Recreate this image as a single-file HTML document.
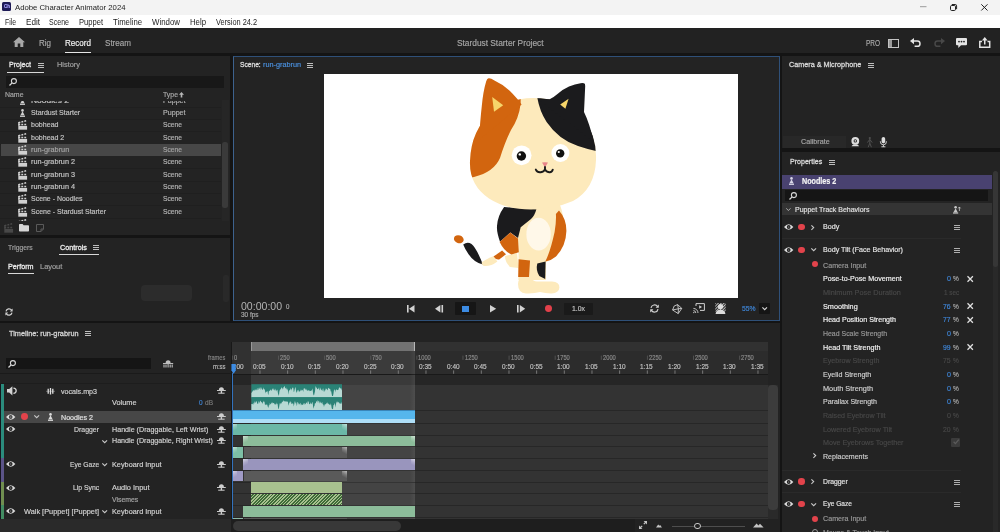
<!DOCTYPE html>
<html><head><meta charset="utf-8"><title>Adobe Character Animator 2024</title>
<style>
*{box-sizing:border-box;margin:0;padding:0}
html,body{width:1000px;height:532px;overflow:hidden;background:#141414;font-family:"Liberation Sans",sans-serif;font-size:8.5px;color:#c8c8c8}
#app{position:absolute;left:0;top:0;width:1000px;height:532px;will-change:transform}
.a{position:absolute}
.t{position:absolute;white-space:nowrap;transform-origin:0 0;-webkit-text-stroke:.18px currentColor}
.p{position:absolute;background:#232323;overflow:hidden}
svg{position:absolute;overflow:visible}
</style></head><body><div id="app">
<div class="a" style="left:0px;top:0px;width:1000px;height:15px;background:#f3f3f3;"></div>
<div class="a" style="left:0px;top:15px;width:1000px;height:13px;background:#ffffff;"></div>
<div class="a" style="left:2px;top:2.4px;width:9px;height:8.6px;background:#1d1a56;border-radius:1.5px"></div>
<div class="t" style="left:3.50px;top:3.49px;font-size:5.20px;line-height:6.50px;color:#a9a4ff;font-weight:700;transform:scaleX(0.8668);">Ch</div>
<div class="t" style="left:15.00px;top:2.63px;font-size:7.50px;line-height:9.38px;color:#1c1c1c;transform:scaleX(1.0312);-webkit-text-stroke:0;">Adobe Character Animator 2024</div>
<div class="t" style="left:5.00px;top:17.30px;font-size:8.30px;line-height:10.38px;color:#1c1c1c;transform:scaleX(0.8224);-webkit-text-stroke:0;">File</div>
<div class="t" style="left:26.00px;top:17.30px;font-size:8.30px;line-height:10.38px;color:#1c1c1c;transform:scaleX(0.9792);-webkit-text-stroke:0;">Edit</div>
<div class="t" style="left:49.00px;top:17.30px;font-size:8.30px;line-height:10.38px;color:#1c1c1c;transform:scaleX(0.8499);-webkit-text-stroke:0;">Scene</div>
<div class="t" style="left:79.00px;top:17.30px;font-size:8.30px;line-height:10.38px;color:#1c1c1c;transform:scaleX(0.9127);-webkit-text-stroke:0;">Puppet</div>
<div class="t" style="left:113.00px;top:17.30px;font-size:8.30px;line-height:10.38px;color:#1c1c1c;transform:scaleX(0.9341);-webkit-text-stroke:0;">Timeline</div>
<div class="t" style="left:152.00px;top:17.30px;font-size:8.30px;line-height:10.38px;color:#1c1c1c;transform:scaleX(0.9487);-webkit-text-stroke:0;">Window</div>
<div class="t" style="left:190.00px;top:17.30px;font-size:8.30px;line-height:10.38px;color:#1c1c1c;transform:scaleX(0.9369);-webkit-text-stroke:0;">Help</div>
<div class="t" style="left:215.50px;top:17.30px;font-size:8.30px;line-height:10.38px;color:#1c1c1c;transform:scaleX(0.8886);-webkit-text-stroke:0;">Version 24.2</div>
<svg style="left:920px;top:6px;" width="7" height="2" viewBox="0 0 7 2"><path d="M0 .7H6.5" stroke="#9a9a9a" stroke-width="1"/></svg>
<svg style="left:950px;top:4px;" width="7" height="7" viewBox="0 0 7 7"><rect x=".5" y="1.5" width="5" height="5" rx="1.2" fill="none" stroke="#222" stroke-width="1"/><path d="M1.8 .5H5.3Q6.6 .5 6.6 1.8V5.2" fill="none" stroke="#222" stroke-width="1"/></svg>
<svg style="left:981px;top:4px;" width="7" height="7" viewBox="0 0 7 7"><path d="M.3 .3L6.5 6.5M6.5 .3L.3 6.5" stroke="#222" stroke-width="1"/></svg>
<div class="a" style="left:0px;top:28px;width:1000px;height:25px;background:#222222;"></div>
<div class="a" style="left:0px;top:53px;width:1000px;height:3px;background:#141414;"></div>
<svg style="left:13px;top:37px;" width="12" height="10" viewBox="0 0 12 10"><path d="M6 0L12 5.2H10.3V10H7.3V6.6H4.7V10H1.7V5.2H0Z" fill="#a8a8a8"/></svg>
<div class="t" style="left:39.00px;top:38.30px;font-size:8.70px;line-height:10.88px;color:#a6a6a6;transform:scaleX(0.9198);">Rig</div>
<div class="t" style="left:64.50px;top:38.30px;font-size:8.70px;line-height:10.88px;color:#f2f2f2;transform:scaleX(0.9281);">Record</div>
<div class="a" style="left:64.5px;top:51.8px;width:26.5px;height:1.5px;background:#e6e6e6;"></div>
<div class="t" style="left:105.00px;top:38.30px;font-size:8.70px;line-height:10.88px;color:#a6a6a6;transform:scaleX(0.9281);">Stream</div>
<div class="t" style="left:456.60px;top:38.10px;font-size:8.70px;line-height:10.88px;color:#a6a6a6;transform:scaleX(0.9580);">Stardust Starter Project</div>
<div class="t" style="left:866.00px;top:38.25px;font-size:8.30px;line-height:10.38px;color:#a8a8a8;transform:scaleX(0.7785);">PRO</div>
<svg style="left:888px;top:39px;" width="11" height="9" viewBox="0 0 11 9"><rect x=".5" y=".5" width="10" height="8" fill="none" stroke="#c4c4c4" stroke-width="1"/><rect x="1" y="1" width="3" height="7" fill="#c4c4c4" opacity=".75"/></svg>
<svg style="left:910px;top:38px;" width="11" height="9" viewBox="0 0 11 9"><path d="M4 0L0 3L4 6.2Z" fill="#e4e4e4"/><path d="M3 3.1H7.4A2.6 2.6 0 0 1 7.4 8.3H4.6" fill="none" stroke="#e4e4e4" stroke-width="1.5"/></svg>
<svg style="left:933.5px;top:38px;" width="11" height="9" viewBox="0 0 11 9"><path d="M7 0L11 3L7 6.2Z" fill="#484848"/><path d="M8 3.1H3.6A2.6 2.6 0 0 0 3.6 8.3H6.4" fill="none" stroke="#484848" stroke-width="1.5"/></svg>
<svg style="left:956px;top:37.5px;" width="11" height="10" viewBox="0 0 11 10"><path d="M1 0H10Q11 0 11 1V6.3Q11 7.3 10 7.3H5L2.3 10V7.3H1Q0 7.3 0 6.3V1Q0 0 1 0Z" fill="#e4e4e4"/><circle cx="3" cy="3.6" r=".9" fill="#222"/><circle cx="5.5" cy="3.6" r=".9" fill="#222"/><circle cx="8" cy="3.6" r=".9" fill="#222"/></svg>
<svg style="left:979px;top:37px;" width="11.5" height="11" viewBox="0 0 11.5 11"><path d="M3 4.6H.8V10.2H10.7V4.6H8.5" fill="none" stroke="#e4e4e4" stroke-width="1.5"/><path d="M5.75 7.5V1.5" stroke="#e4e4e4" stroke-width="1.5"/><path d="M2.9 3.4L5.75 0L8.6 3.4Z" fill="#e4e4e4"/></svg>
<div class="p" style="left:0;top:56px;width:229.5px;height:178.5px">
<div class="t" style="left:8.50px;top:4.24px;font-size:7.60px;line-height:9.50px;color:#e8e8e8;transform:scaleX(0.9306);-webkit-text-stroke:.3px currentColor;">Project</div>
<svg style="left:37.5px;top:6.8px;" width="6" height="5" viewBox="0 0 6 5"><path d="M0 .5H6M0 2.5H6M0 4.5H6" stroke="#cfcfcf" stroke-width=".9" fill="none"/></svg>
<div class="a" style="left:7px;top:15.8px;width:36.5px;height:1.1px;background:#d8d8d8;"></div>
<div class="t" style="left:57.00px;top:4.24px;font-size:7.60px;line-height:9.50px;color:#a2a2a2;transform:scaleX(0.9729);">History</div>
<div class="a" style="left:6px;top:19.8px;width:218px;height:12px;background:#181818;"></div>
<svg style="left:9px;top:22px;" width="8" height="8" viewBox="0 0 8 8"><circle cx="4.9" cy="3.1" r="2.5" fill="none" stroke="#d8d8d8" stroke-width="1.1"/><path d="M3.1 4.9L.5 7.5" stroke="#d8d8d8" stroke-width="1.3"/></svg>
<div class="t" style="left:4.50px;top:34.44px;font-size:7.60px;line-height:9.50px;color:#a8a8a8;transform:scaleX(0.9129);">Name</div>
<div class="t" style="left:163.00px;top:34.44px;font-size:7.60px;line-height:9.50px;color:#a8a8a8;transform:scaleX(0.9108);">Type</div>
<svg style="left:179.4px;top:36.2px;" width="5" height="5.6" viewBox="0 0 5 5.6"><path d="M2.5 0L5 2.8H3.3V5.6H1.7V2.8H0Z" fill="#b8b8b8"/></svg>
<div class="a" style="left:0;top:45.3px;width:221px;height:119.4px;overflow:hidden">
<svg style="left:17.5px;top:117.65px;" width="9.4" height="9.7" viewBox="0 0 9.4 9.7"><rect x=".3" y="5.9" width="8.8" height="3.8" fill="#d0d0d0"/><path d="M.3 4.5H9.1" stroke="#d0d0d0" stroke-width="1.5" stroke-dasharray="1.9 1.1"/><path d="M.5 2.7L8.7 .7" stroke="#d0d0d0" stroke-width="1.5" stroke-dasharray="1.9 1.1"/><rect x=".3" y="2" width="1.2" height="4" fill="#d0d0d0"/></svg>
<div class="a" style="left:0px;top:5.25px;width:221px;height:0.8px;background:#1f1f1f;"></div>
<svg style="left:19.5px;top:-4.45px;" width="5" height="8" viewBox="0 0 5 8"><circle cx="2.5" cy="1.4" r="1.3" fill="#d0d0d0"/><path d="M2.5 2.2L4.6 6.3H.4Z" fill="#d0d0d0"/><rect x="0" y="6.6" width="5" height="1.3" fill="#d0d0d0"/></svg>
<div class="t" style="left:30.50px;top:-5.51px;font-size:7.60px;line-height:9.50px;color:#c4c4c4;transform:scaleX(1.1110);">Noodles 2</div>
<div class="t" style="left:163.00px;top:-5.51px;font-size:7.60px;line-height:9.50px;color:#b4b4b4;transform:scaleX(0.9345);">Puppet</div>
<div class="a" style="left:0px;top:17.58px;width:221px;height:0.8px;background:#1f1f1f;"></div>
<svg style="left:19.5px;top:7.88px;" width="5" height="8" viewBox="0 0 5 8"><circle cx="2.5" cy="1.4" r="1.3" fill="#d0d0d0"/><path d="M2.5 2.2L4.6 6.3H.4Z" fill="#d0d0d0"/><rect x="0" y="6.6" width="5" height="1.3" fill="#d0d0d0"/></svg>
<div class="t" style="left:30.50px;top:6.82px;font-size:7.60px;line-height:9.50px;color:#c4c4c4;transform:scaleX(0.9250);">Stardust Starter</div>
<div class="t" style="left:163.00px;top:6.82px;font-size:7.60px;line-height:9.50px;color:#b4b4b4;transform:scaleX(0.9345);">Puppet</div>
<div class="a" style="left:0px;top:29.91px;width:221px;height:0.8px;background:#1f1f1f;"></div>
<svg style="left:17.5px;top:19.01px;" width="9.4" height="9.7" viewBox="0 0 9.4 9.7"><rect x=".3" y="5.9" width="8.8" height="3.8" fill="#d0d0d0"/><path d="M.3 4.5H9.1" stroke="#d0d0d0" stroke-width="1.5" stroke-dasharray="1.9 1.1"/><path d="M.5 2.7L8.7 .7" stroke="#d0d0d0" stroke-width="1.5" stroke-dasharray="1.9 1.1"/><rect x=".3" y="2" width="1.2" height="4" fill="#d0d0d0"/></svg>
<div class="t" style="left:30.50px;top:19.15px;font-size:7.60px;line-height:9.50px;color:#c4c4c4;transform:scaleX(0.9297);">bobhead</div>
<div class="t" style="left:163.00px;top:19.15px;font-size:7.60px;line-height:9.50px;color:#b4b4b4;transform:scaleX(0.8818);">Scene</div>
<div class="a" style="left:0px;top:42.24px;width:221px;height:0.8px;background:#1f1f1f;"></div>
<svg style="left:17.5px;top:31.34px;" width="9.4" height="9.7" viewBox="0 0 9.4 9.7"><rect x=".3" y="5.9" width="8.8" height="3.8" fill="#d0d0d0"/><path d="M.3 4.5H9.1" stroke="#d0d0d0" stroke-width="1.5" stroke-dasharray="1.9 1.1"/><path d="M.5 2.7L8.7 .7" stroke="#d0d0d0" stroke-width="1.5" stroke-dasharray="1.9 1.1"/><rect x=".3" y="2" width="1.2" height="4" fill="#d0d0d0"/></svg>
<div class="t" style="left:30.50px;top:31.48px;font-size:7.60px;line-height:9.50px;color:#c4c4c4;transform:scaleX(0.9274);">bobhead 2</div>
<div class="t" style="left:163.00px;top:31.48px;font-size:7.60px;line-height:9.50px;color:#b4b4b4;transform:scaleX(0.8818);">Scene</div>
<div class="a" style="left:1px;top:43.07px;width:220px;height:11.3px;background:#474747;"></div>
<svg style="left:17.5px;top:43.67px;" width="9.4" height="9.7" viewBox="0 0 9.4 9.7"><rect x=".3" y="5.9" width="8.8" height="3.8" fill="#d0d0d0"/><path d="M.3 4.5H9.1" stroke="#d0d0d0" stroke-width="1.5" stroke-dasharray="1.9 1.1"/><path d="M.5 2.7L8.7 .7" stroke="#d0d0d0" stroke-width="1.5" stroke-dasharray="1.9 1.1"/><rect x=".3" y="2" width="1.2" height="4" fill="#d0d0d0"/></svg>
<div class="t" style="left:30.50px;top:43.81px;font-size:7.60px;line-height:9.50px;color:#a4a4a4;transform:scaleX(0.9625);">run-grabrun</div>
<div class="t" style="left:163.00px;top:43.81px;font-size:7.60px;line-height:9.50px;color:#a4a4a4;transform:scaleX(0.8818);">Scene</div>
<div class="a" style="left:0px;top:66.9px;width:221px;height:0.8px;background:#1f1f1f;"></div>
<svg style="left:17.5px;top:56px;" width="9.4" height="9.7" viewBox="0 0 9.4 9.7"><rect x=".3" y="5.9" width="8.8" height="3.8" fill="#d0d0d0"/><path d="M.3 4.5H9.1" stroke="#d0d0d0" stroke-width="1.5" stroke-dasharray="1.9 1.1"/><path d="M.5 2.7L8.7 .7" stroke="#d0d0d0" stroke-width="1.5" stroke-dasharray="1.9 1.1"/><rect x=".3" y="2" width="1.2" height="4" fill="#d0d0d0"/></svg>
<div class="t" style="left:30.50px;top:56.14px;font-size:7.60px;line-height:9.50px;color:#c4c4c4;transform:scaleX(0.9562);">run-grabrun 2</div>
<div class="t" style="left:163.00px;top:56.14px;font-size:7.60px;line-height:9.50px;color:#b4b4b4;transform:scaleX(0.8818);">Scene</div>
<div class="a" style="left:0px;top:79.23px;width:221px;height:0.8px;background:#1f1f1f;"></div>
<svg style="left:17.5px;top:68.33px;" width="9.4" height="9.7" viewBox="0 0 9.4 9.7"><rect x=".3" y="5.9" width="8.8" height="3.8" fill="#d0d0d0"/><path d="M.3 4.5H9.1" stroke="#d0d0d0" stroke-width="1.5" stroke-dasharray="1.9 1.1"/><path d="M.5 2.7L8.7 .7" stroke="#d0d0d0" stroke-width="1.5" stroke-dasharray="1.9 1.1"/><rect x=".3" y="2" width="1.2" height="4" fill="#d0d0d0"/></svg>
<div class="t" style="left:30.50px;top:68.47px;font-size:7.60px;line-height:9.50px;color:#c4c4c4;transform:scaleX(0.9562);">run-grabrun 3</div>
<div class="t" style="left:163.00px;top:68.47px;font-size:7.60px;line-height:9.50px;color:#b4b4b4;transform:scaleX(0.8818);">Scene</div>
<div class="a" style="left:0px;top:91.56px;width:221px;height:0.8px;background:#1f1f1f;"></div>
<svg style="left:17.5px;top:80.66px;" width="9.4" height="9.7" viewBox="0 0 9.4 9.7"><rect x=".3" y="5.9" width="8.8" height="3.8" fill="#d0d0d0"/><path d="M.3 4.5H9.1" stroke="#d0d0d0" stroke-width="1.5" stroke-dasharray="1.9 1.1"/><path d="M.5 2.7L8.7 .7" stroke="#d0d0d0" stroke-width="1.5" stroke-dasharray="1.9 1.1"/><rect x=".3" y="2" width="1.2" height="4" fill="#d0d0d0"/></svg>
<div class="t" style="left:30.50px;top:80.80px;font-size:7.60px;line-height:9.50px;color:#c4c4c4;transform:scaleX(0.9562);">run-grabrun 4</div>
<div class="t" style="left:163.00px;top:80.80px;font-size:7.60px;line-height:9.50px;color:#b4b4b4;transform:scaleX(0.8818);">Scene</div>
<div class="a" style="left:0px;top:103.89px;width:221px;height:0.8px;background:#1f1f1f;"></div>
<svg style="left:17.5px;top:92.99px;" width="9.4" height="9.7" viewBox="0 0 9.4 9.7"><rect x=".3" y="5.9" width="8.8" height="3.8" fill="#d0d0d0"/><path d="M.3 4.5H9.1" stroke="#d0d0d0" stroke-width="1.5" stroke-dasharray="1.9 1.1"/><path d="M.5 2.7L8.7 .7" stroke="#d0d0d0" stroke-width="1.5" stroke-dasharray="1.9 1.1"/><rect x=".3" y="2" width="1.2" height="4" fill="#d0d0d0"/></svg>
<div class="t" style="left:30.50px;top:93.13px;font-size:7.60px;line-height:9.50px;color:#c4c4c4;transform:scaleX(0.9171);">Scene - Noodles</div>
<div class="t" style="left:163.00px;top:93.13px;font-size:7.60px;line-height:9.50px;color:#b4b4b4;transform:scaleX(0.8818);">Scene</div>
<div class="a" style="left:0px;top:116.22px;width:221px;height:0.8px;background:#1f1f1f;"></div>
<svg style="left:17.5px;top:105.32px;" width="9.4" height="9.7" viewBox="0 0 9.4 9.7"><rect x=".3" y="5.9" width="8.8" height="3.8" fill="#d0d0d0"/><path d="M.3 4.5H9.1" stroke="#d0d0d0" stroke-width="1.5" stroke-dasharray="1.9 1.1"/><path d="M.5 2.7L8.7 .7" stroke="#d0d0d0" stroke-width="1.5" stroke-dasharray="1.9 1.1"/><rect x=".3" y="2" width="1.2" height="4" fill="#d0d0d0"/></svg>
<div class="t" style="left:30.50px;top:105.46px;font-size:7.60px;line-height:9.50px;color:#c4c4c4;transform:scaleX(0.9206);">Scene - Stardust Starter</div>
<div class="t" style="left:163.00px;top:105.46px;font-size:7.60px;line-height:9.50px;color:#b4b4b4;transform:scaleX(0.8818);">Scene</div>
</div>
<div class="a" style="left:221.5px;top:43.5px;width:7.5px;height:121px;background:#262626;"></div>
<div class="a" style="left:222px;top:85.5px;width:5.5px;height:66px;background:#3a3a3a;border-radius:2.5px"></div>
<svg style="left:4.3px;top:167.1px;" width="9.4" height="9.7" viewBox="0 0 9.4 9.7"><rect x=".3" y="5.9" width="8.8" height="3.8" fill="#484848"/><path d="M.3 4.5H9.1" stroke="#484848" stroke-width="1.5" stroke-dasharray="1.9 1.1"/><path d="M.5 2.7L8.7 .7" stroke="#484848" stroke-width="1.5" stroke-dasharray="1.9 1.1"/><rect x=".3" y="2" width="1.2" height="4" fill="#484848"/></svg>
<svg style="left:19px;top:168.2px;" width="10" height="7.5" viewBox="0 0 10 7.5"><path d="M0 .8Q0 0 .8 0H3.6L4.6 1.2H9.2Q10 1.2 10 2V6.7Q10 7.5 9.2 7.5H.8Q0 7.5 0 6.7Z" fill="#d6d6d6"/></svg>
<svg style="left:36px;top:168px;" width="8" height="8" viewBox="0 0 8 8"><path d="M.5 .5H7.5V5L5 7.5H.5Z M7.5 5H5V7.5" fill="none" stroke="#5a5a5a" stroke-width="1"/></svg>
</div>
<div class="p" style="left:0;top:237.8px;width:229.5px;height:83.4px">
<div class="t" style="left:8.40px;top:5.14px;font-size:7.60px;line-height:9.50px;color:#a2a2a2;transform:scaleX(0.8920);">Triggers</div>
<div class="t" style="left:59.60px;top:5.14px;font-size:7.60px;line-height:9.50px;color:#ececec;transform:scaleX(0.9547);-webkit-text-stroke:.3px currentColor;">Controls</div>
<svg style="left:92.8px;top:7.2px;" width="6" height="5" viewBox="0 0 6 5"><path d="M0 .5H6M0 2.5H6M0 4.5H6" stroke="#cfcfcf" stroke-width=".9" fill="none"/></svg>
<div class="a" style="left:58.7px;top:16.5px;width:40px;height:1.1px;background:#d8d8d8;"></div>
<div class="t" style="left:7.50px;top:24.14px;font-size:7.60px;line-height:9.50px;color:#ececec;transform:scaleX(0.9439);-webkit-text-stroke:.3px currentColor;">Perform</div>
<div class="a" style="left:7.5px;top:35.1px;width:26.2px;height:1px;background:#d8d8d8;"></div>
<div class="t" style="left:40.00px;top:24.14px;font-size:7.60px;line-height:9.50px;color:#a2a2a2;transform:scaleX(0.9775);">Layout</div>
<div class="a" style="left:141px;top:47.4px;width:51px;height:16.3px;background:#2c2c2c;border-radius:4px"></div>
<div class="a" style="left:222.5px;top:37.2px;width:6px;height:27px;background:#292929;border-radius:2px"></div>
<svg style="left:5px;top:69.9px;" width="8" height="8" viewBox="0 0 8 8"><path d="M1 3.4A3.1 3.1 0 0 1 6.6 2.2" fill="none" stroke="#d0d0d0" stroke-width="1.2"/><path d="M7.6 .6V3.4H4.8Z" fill="#d0d0d0"/><path d="M7 4.6A3.1 3.1 0 0 1 1.4 5.8" fill="none" stroke="#d0d0d0" stroke-width="1.2"/><path d="M.4 7.4V4.6H3.2Z" fill="#d0d0d0"/></svg>
</div>
<div class="p" style="left:232.5px;top:55.5px;width:547px;height:265.5px;border:1px solid #2f5078;border-left-color:#3d628e"></div>
<div class="t" style="left:240.00px;top:60.14px;font-size:7.60px;line-height:9.50px;color:#dcdcdc;transform:scaleX(0.8750);-webkit-text-stroke:.3px currentColor;">Scene:</div>
<div class="t" style="left:262.50px;top:60.14px;font-size:7.60px;line-height:9.50px;color:#4a8fdc;transform:scaleX(0.9575);">run-grabrun</div>
<svg style="left:307.3px;top:63px;" width="6" height="5" viewBox="0 0 6 5"><path d="M0 .5H6M0 2.5H6M0 4.5H6" stroke="#cfcfcf" stroke-width=".9" fill="none"/></svg>
<div class="a" style="left:323.8px;top:73.8px;width:414px;height:224.5px;background:#ffffff;"></div>
<svg style="left:0;top:0" width="1000" height="532" viewBox="0 0 1000 532"><ellipse cx="458.8" cy="239.3" rx="5" ry="3.9" transform="rotate(18 458.8 239.3)" fill="#d2650f"/><path d="M463.2 244.4Q467.5 241.4 471.5 244Q476.5 248 482.9 264.6Q474 262.4 468.4 254Q465 249 463.2 244.4Z" fill="#1b1b1d"/><path d="M481.6 262.4Q485 259.4 493.4 256.2L497.4 261.4Q491 266.4 484.4 266Q482 265.6 481.6 262.4Z" fill="#fdeabc"/><path d="M493.5 256.6L502.1 250.4L506 254.2L499.2 259.4Q495.6 260 493.5 256.6Z" fill="#d2650f"/><path d="M515 205H560Q566 220 563 243Q556 258 546 262V280H518.4Q519 250 517.6 236Z" fill="#fdeabc"/><path d="M505 256L517 253L518.5 268L510 267Q505 262 505 256Z" fill="#fdeabc"/><path d="M504.1 207L536.4 209.2Q534.5 216 531 219L520.7 227.2L518 238L510.3 232.4L500 241.7Q496.5 232 497 226Q497.5 216 504.1 207Z" fill="#1b1b1d"/><path d="M510.3 232.4L518 238.4L518.8 252.2L511.4 254.4Q504 251 499.6 241.9Z" fill="#d2650f"/><path d="M559 210.5Q566.5 219 566.4 231Q566 246 556 256.4Q551 260.6 545.3 261.6Q550.5 251 554.6 232Q556.4 222 555.9 214Z" fill="#d2650f"/><ellipse cx="538.6" cy="234.2" rx="12.2" ry="16.4" fill="#fff8e9"/><path d="M518.6 259.2L530 260.4L529 277H518.2Z" fill="#d2650f"/><path d="M537.3 263.6L545.6 261.4L545.2 279L539.3 276Q535.6 270 537.3 263.6Z" fill="#1b1b1d"/><path d="M518 284Q518 277.6 524 277.6H531Q533 281.6 537 281.6H552Q559.6 282 559.4 287.6Q559 293.6 551 293.4Q545 293.2 540 292Q534 293.8 526 293.4Q518 293 518 284Z" fill="#fdeabc"/><path d="M533 98Q565 98 583 118Q597 136 596 160Q595 189 573 201Q553 209.5 531 209.5Q506 209.5 489 198.5Q469 185 470 161Q471 130 492 112Q510 98 533 98Z" fill="#fdeabc"/><clipPath id="hc"><path d="M533 98Q565 98 583 118Q597 136 596 160Q595 189 573 201Q553 209.5 531 209.5Q506 209.5 489 198.5Q469 185 470 161Q471 130 492 112Q510 98 533 98Z"/></clipPath><g clip-path="url(#hc)"><path d="M460 90H521L520.6 104Q519 118 511 130Q505 142 500 158Q494 172 474 177L460 180Z" fill="#d2650f"/><path d="M536.4 90Q537.6 108 546.6 122Q559 140 578 146Q590 150 600 152V90Z" fill="#1b1b1d"/></g><path d="M488.6 78.2Q490.6 77.8 494.4 80.6Q505 85.4 512.4 93.4Q517.6 98.6 521.6 104.6L479 140Q480.2 120 481.8 106Q483 92 486.2 81.2Q487.2 78.4 488.6 78.2Z" fill="#d2650f"/><path d="M583.8 83.3Q585.2 83 585.2 86Q584.6 100 584 112Q589 122 594 142L538 99.6L549.6 99.3Q554 97.2 557.8 93.8Q563 89 569 86.4Q575 84 580.6 83.2Q582.8 82.9 583.8 83.3Z" fill="#1b1b1d"/><path d="M492.2 97L503.2 105.2L494 111.8Z" fill="#f6d56a"/><path d="M568.6 98.8L560.2 104.6L565.4 108.8Z" fill="#f6d56a"/><circle cx="521.6" cy="155.3" r="9.9" fill="#fff"/><circle cx="521.4" cy="156" r="4.7" fill="#111"/><circle cx="519.8" cy="154.4" r="1.2" fill="#fff"/><circle cx="560.4" cy="153" r="9" fill="#fff"/><circle cx="560.2" cy="153.4" r="4.2" fill="#111"/><circle cx="558.8" cy="152" r="1.1" fill="#fff"/><path d="M542 162.6Q545 162 548 162.6L545 167.4Z" fill="#e8868a"/><path d="M545 167V169.4M535.8 169.6Q537.4 172.8 540.8 172.2Q544.2 171.6 545 169.2Q545.8 171.6 549.2 172.2Q552 172.6 552.8 169.6" fill="none" stroke="#1a1a1a" stroke-width="1.9" stroke-linecap="round"/></svg>
<div class="t" style="left:240.90px;top:299.81px;font-size:10.80px;line-height:13.50px;color:#b4b4b4;transform:scaleX(0.9778);-webkit-text-stroke:0;">00:00:00</div>
<div class="t" style="left:285.80px;top:302.81px;font-size:6.80px;line-height:8.50px;color:#ababab;transform:scaleX(0.8992);">0</div>
<div class="t" style="left:240.90px;top:311.01px;font-size:6.80px;line-height:8.50px;color:#ababab;transform:scaleX(0.9505);">30 fps</div>
<svg style="left:406.6px;top:305.2px;" width="7.5" height="7.5" viewBox="0 0 7.5 7.5"><rect x="0" y="0" width="1.6" height="7.5" fill="#d2d2d2"/><path d="M7.5 0V7.5L2 3.75Z" fill="#d2d2d2"/></svg>
<svg style="left:434.5px;top:305.2px;" width="8.2" height="7.5" viewBox="0 0 8.2 7.5"><path d="M5.4 0V7.5L0 3.75Z" fill="#d2d2d2"/><rect x="6.5" y="0" width="1.6" height="7.5" fill="#d2d2d2"/></svg>
<div class="a" style="left:454.6px;top:302.4px;width:21.7px;height:13px;background:#161616;border-radius:1px"></div>
<div class="a" style="left:462px;top:305.5px;width:7px;height:6.7px;background:#3c8be2;"></div>
<svg style="left:490px;top:305.2px;" width="6.2" height="7.5" viewBox="0 0 6.2 7.5"><path d="M0 0V7.5L6.2 3.75Z" fill="#d2d2d2"/></svg>
<svg style="left:516.5px;top:305.2px;" width="8.2" height="7.5" viewBox="0 0 8.2 7.5"><rect x="0" y="0" width="1.6" height="7.5" fill="#d2d2d2"/><path d="M2.8 0V7.5L8.2 3.75Z" fill="#d2d2d2"/></svg>
<div class="a" style="left:544.7px;top:305.4px;width:6.9px;height:6.9px;background:#e2404a;border-radius:50%"></div>
<div class="a" style="left:563.7px;top:303px;width:29.5px;height:12.4px;background:#1a1a1a;border-radius:1px"></div>
<div class="t" style="left:572.00px;top:303.87px;font-size:7.60px;line-height:9.50px;color:#c4c4c4;transform:scaleX(0.9053);">1.0x</div>
<svg style="left:650.3px;top:304.2px;" width="9" height="9" viewBox="0 0 9 9"><path d="M1 3.9A3.6 3.6 0 0 1 7.6 2.6" fill="none" stroke="#d0d0d0" stroke-width="1.2"/><path d="M8.8 .6V3.8H5.6Z" fill="#d0d0d0"/><path d="M8 5.1A3.6 3.6 0 0 1 1.4 6.4" fill="none" stroke="#d0d0d0" stroke-width="1.2"/><path d="M.2 8.4V5.2H3.4Z" fill="#d0d0d0"/></svg>
<svg style="left:672px;top:303.6px;" width="10.4" height="10.4" viewBox="0 0 10.4 10.4"><path d="M5.6 .6L9.8 4.4L6.2 9.6L.6 6L2.2 2Z M.6 6L6.4 4.8L5.6 .6M6.4 4.8L9.8 4.4M6.4 4.8L6.2 9.6" fill="none" stroke="#d0d0d0" stroke-width=".9" stroke-linejoin="round"/></svg>
<svg style="left:693.2px;top:303.4px;" width="12" height="10.5" viewBox="0 0 12 10.5"><path d="M3 3V.6H11.4V7.4H7" fill="none" stroke="#d0d0d0" stroke-width="1"/><path d="M6.2 2.2V5.8L9 4Z" fill="#d0d0d0"/><path d="M.4 5.4A4.6 4.6 0 0 1 5 10M.4 7.6A2.4 2.4 0 0 1 2.8 10" fill="none" stroke="#d0d0d0" stroke-width=".9"/><circle cx=".8" cy="9.6" r=".7" fill="#d0d0d0"/></svg>
<svg style="left:715.2px;top:303.2px;" width="11" height="11" viewBox="0 0 11 11"><defs><pattern id="hp" width="2" height="2" patternUnits="userSpaceOnUse" patternTransform="rotate(45)"><rect width="1" height="2" fill="#bdbdbd"/></pattern></defs><rect x=".3" y="0" width="10.4" height="8.6" fill="url(#hp)"/><circle cx="5.5" cy="3.6" r="2.6" fill="#dcdcdc"/><path d="M.6 11Q.8 7 5.5 6.8Q10.2 7 10.4 11Z" fill="#dcdcdc"/></svg>
<div class="t" style="left:742.00px;top:303.50px;font-size:8.00px;line-height:10.00px;color:#3f86d8;transform:scaleX(0.8492);">55%</div>
<div class="a" style="left:758.8px;top:303px;width:11px;height:11.4px;background:#151515;border-radius:1px"></div>
<svg style="left:761.6px;top:306.8px;" width="5.4" height="3.4" viewBox="0 0 5.4 3.4"><path d="M.4 .4L2.7 2.7L5 .4" fill="none" stroke="#d8d8d8" stroke-width="1.1"/></svg>
<div class="a" style="left:781.5px;top:55.5px;width:218.5px;height:92.8px;background:#232323;"></div>
<div class="t" style="left:789.20px;top:60.24px;font-size:7.60px;line-height:9.50px;color:#d8d8d8;transform:scaleX(0.9502);-webkit-text-stroke:.3px currentColor;">Camera &amp; Microphone</div>
<svg style="left:868px;top:62.8px;" width="6" height="5" viewBox="0 0 6 5"><path d="M0 .5H6M0 2.5H6M0 4.5H6" stroke="#cfcfcf" stroke-width=".9" fill="none"/></svg>
<div class="a" style="left:783px;top:136.2px;width:63px;height:11.6px;background:#282828;"></div>
<div class="t" style="left:800.50px;top:137.24px;font-size:7.60px;line-height:9.50px;color:#a6a6a6;transform:scaleX(0.9411);">Calibrate</div>
<svg style="left:851.2px;top:137.1px;" width="8.6" height="10.2" viewBox="0 0 8.6 10.2"><circle cx="4.3" cy="3.9" r="3.9" fill="#dedede"/><circle cx="4.3" cy="3.9" r="1.7" fill="#232323"/><circle cx="4.3" cy="3.9" r=".8" fill="#dedede"/><path d="M.6 9.3Q1 7.4 4.3 7.4Q7.6 7.4 8 9.3Z" fill="#dedede"/></svg>
<svg style="left:867.4px;top:136.8px;" width="5.6" height="10.2" viewBox="0 0 5.6 10.2"><circle cx="2.8" cy="1.1" r="1.1" fill="#505050"/><path d="M2.8 2.4L.4 5.6M2.8 2.4L5.2 5.6M2.8 2.4V6.2L1.2 10.2M2.8 6.2L4.4 10.2" stroke="#505050" stroke-width="1" fill="none"/></svg>
<svg style="left:880.3px;top:136.8px;" width="6.8" height="10.2" viewBox="0 0 6.8 10.2"><rect x="1.6" y="0" width="3.6" height="6.4" rx="1.8" fill="#dedede"/><path d="M.4 4.2V4.8Q.4 7.8 3.4 7.8Q6.4 7.8 6.4 4.8V4.2" fill="none" stroke="#dedede" stroke-width=".9"/><path d="M3.4 7.8V9.8M1.4 9.8H5.4" stroke="#dedede" stroke-width=".9"/></svg>
<div class="a" style="left:781.5px;top:152px;width:218.5px;height:380px;background:#232323;"></div>
<div class="t" style="left:789.70px;top:157.44px;font-size:7.60px;line-height:9.50px;color:#d8d8d8;transform:scaleX(0.9300);-webkit-text-stroke:.3px currentColor;">Properties</div>
<svg style="left:829.4px;top:160.1px;" width="6" height="5" viewBox="0 0 6 5"><path d="M0 .5H6M0 2.5H6M0 4.5H6" stroke="#cfcfcf" stroke-width=".9" fill="none"/></svg>
<div class="a" style="left:782.2px;top:174.8px;width:209.8px;height:14px;background:#494270;"></div>
<svg style="left:788.6px;top:177.4px;" width="5" height="8" viewBox="0 0 5 8"><circle cx="2.5" cy="1.4" r="1.3" fill="#d8d6e6"/><path d="M2.5 2.2L4.6 6.3H.4Z" fill="#d8d6e6"/><rect x="0" y="6.6" width="5" height="1.3" fill="#d8d6e6"/></svg>
<div class="t" style="left:801.60px;top:176.11px;font-size:8.30px;line-height:10.38px;color:#f4f4f4;font-weight:700;transform:scaleX(0.8649);">Noodles 2</div>
<div class="a" style="left:785.2px;top:190.3px;width:202.8px;height:11.1px;background:#151515;"></div>
<svg style="left:789px;top:192.4px;" width="8" height="8" viewBox="0 0 8 8"><circle cx="4.9" cy="3.1" r="2.5" fill="none" stroke="#d8d8d8" stroke-width="1.1"/><path d="M3.1 4.9L.5 7.5" stroke="#d8d8d8" stroke-width="1.3"/></svg>
<div class="a" style="left:782.2px;top:203.4px;width:209.8px;height:12px;background:#343434;"></div>
<svg style="left:785.8px;top:207.6px;" width="4.8" height="3.2" viewBox="0 0 4.8 3.2"><path d="M.3 .3L2.4 2.6L4.5 .3" fill="none" stroke="#a8a8a8" stroke-width="1"/></svg>
<div class="t" style="left:795.30px;top:205.34px;font-size:7.60px;line-height:9.50px;color:#e0e0e0;transform:scaleX(0.9228);">Puppet Track Behaviors</div>
<svg style="left:953px;top:205.8px;" width="7.6" height="7.6" viewBox="0 0 7.6 7.6"><circle cx="2.6" cy="1.3" r="1.3" fill="#c8c8c8"/><path d="M2.6 2.2L4.8 6.4H.4Z" fill="#c8c8c8"/><rect x="0" y="6.5" width="5.2" height="1.1" fill="#c8c8c8"/><path d="M6.4 1V5M5.2 2.4L6.4 1L7.6 2.4" stroke="#c8c8c8" stroke-width=".8" fill="none"/></svg>
<div class="a" style="left:992.6px;top:171.4px;width:5.6px;height:360.6px;background:#292929;border-radius:2.6px 2.6px 0 0"></div>
<div class="a" style="left:992.8px;top:171.4px;width:5.6px;height:95.4px;background:#363636;border-radius:2.6px"></div>
<svg style="left:784.4px;top:224.2px;" width="9.4" height="6" viewBox="0 0 9.4 6"><path d="M0 3Q4.7 -2.6 9.4 3Q4.7 8.6 0 3Z" fill="#dcdcdc"/><circle cx="4.7" cy="3" r="1.9" fill="#232323"/><circle cx="4.7" cy="3" r=".6" fill="#dcdcdc" opacity=".7"/></svg><div class="a" style="left:798.4px;top:224px;width:6.4px;height:6.4px;background:#e2434b;border-radius:50%"></div><svg style="left:811px;top:224.6px;" width="3.2" height="5.2" viewBox="0 0 3.2 5.2"><path d="M.4 .3L2.7 2.6L.4 4.9" fill="none" stroke="#c8c8c8" stroke-width="1.1"/></svg><div class="t" style="left:823.00px;top:222.24px;font-size:7.60px;line-height:9.50px;color:#e4e4e4;transform:scaleX(0.9415);">Body</div><svg style="left:954.3px;top:225.1px;" width="6" height="5" viewBox="0 0 6 5"><path d="M0 .5H6M0 2.5H6M0 4.5H6" stroke="#bebebe" stroke-width=".9" fill="none"/></svg>
<div class="a" style="left:782px;top:238.3px;width:178.5px;height:0.8px;background:#2a2a2a;"></div>
<svg style="left:784.4px;top:246.8px;" width="9.4" height="6" viewBox="0 0 9.4 6"><path d="M0 3Q4.7 -2.6 9.4 3Q4.7 8.6 0 3Z" fill="#dcdcdc"/><circle cx="4.7" cy="3" r="1.9" fill="#232323"/><circle cx="4.7" cy="3" r=".6" fill="#dcdcdc" opacity=".7"/></svg><div class="a" style="left:798.4px;top:246.6px;width:6.4px;height:6.4px;background:#e2434b;border-radius:50%"></div><svg style="left:810.6px;top:248.3px;" width="5.4" height="3.2" viewBox="0 0 5.4 3.2"><path d="M.3 .3L2.7 2.7L5.1 .3" fill="none" stroke="#c8c8c8" stroke-width="1.1"/></svg><div class="t" style="left:823.00px;top:244.84px;font-size:7.60px;line-height:9.50px;color:#e4e4e4;transform:scaleX(0.9382);">Body Tilt (Face Behavior)</div><svg style="left:954.3px;top:247.7px;" width="6" height="5" viewBox="0 0 6 5"><path d="M0 .5H6M0 2.5H6M0 4.5H6" stroke="#bebebe" stroke-width=".9" fill="none"/></svg>
<div class="a" style="left:811.8px;top:261.4px;width:6px;height:6px;background:#e2434b;border-radius:50%"></div>
<div class="t" style="left:823.00px;top:260.54px;font-size:7.60px;line-height:9.50px;color:#989898;transform:scaleX(0.9410);">Camera Input</div>
<div class="t" style="left:823.00px;top:274.34px;font-size:7.60px;line-height:9.50px;color:#f0f0f0;transform:scaleX(0.9416);">Pose-to-Pose Movement</div>
<div class="t" style="left:953.00px;top:274.34px;font-size:7.60px;line-height:9.50px;color:#a8a8a8;transform:scaleX(0.8573);">%</div>
<div class="t" style="left:946.60px;top:274.34px;font-size:7.60px;line-height:9.50px;color:#3f86d8;transform:scaleX(0.9446);">0</div>
<svg style="left:966.8px;top:275.8px;" width="6.4" height="6" viewBox="0 0 6.4 6"><path d="M.5 .3L5.9 5.7M5.9 .3L.5 5.7" stroke="#e0e0e0" stroke-width="1.3" fill="none"/></svg>
<div class="t" style="left:823.00px;top:288.00px;font-size:7.60px;line-height:9.50px;color:#474747;transform:scaleX(0.9601);">Minimum Pose Duration</div>
<div class="t" style="left:943.70px;top:288.00px;font-size:7.60px;line-height:9.50px;color:#474747;transform:scaleX(0.8317);">1 sec</div>
<div class="t" style="left:823.00px;top:301.67px;font-size:7.60px;line-height:9.50px;color:#f0f0f0;transform:scaleX(0.9556);">Smoothing</div>
<div class="t" style="left:953.00px;top:301.67px;font-size:7.60px;line-height:9.50px;color:#a8a8a8;transform:scaleX(0.8573);">%</div>
<div class="t" style="left:943.00px;top:301.67px;font-size:7.60px;line-height:9.50px;color:#3f86d8;transform:scaleX(0.8991);">76</div>
<svg style="left:966.8px;top:303.13px;" width="6.4" height="6" viewBox="0 0 6.4 6"><path d="M.5 .3L5.9 5.7M5.9 .3L.5 5.7" stroke="#e0e0e0" stroke-width="1.3" fill="none"/></svg>
<div class="t" style="left:823.00px;top:315.33px;font-size:7.60px;line-height:9.50px;color:#f0f0f0;transform:scaleX(0.9346);">Head Position Strength</div>
<div class="t" style="left:953.00px;top:315.33px;font-size:7.60px;line-height:9.50px;color:#a8a8a8;transform:scaleX(0.8573);">%</div>
<div class="t" style="left:943.00px;top:315.33px;font-size:7.60px;line-height:9.50px;color:#3f86d8;transform:scaleX(0.8991);">77</div>
<svg style="left:966.8px;top:316.795px;" width="6.4" height="6" viewBox="0 0 6.4 6"><path d="M.5 .3L5.9 5.7M5.9 .3L.5 5.7" stroke="#e0e0e0" stroke-width="1.3" fill="none"/></svg>
<div class="t" style="left:823.00px;top:329.00px;font-size:7.60px;line-height:9.50px;color:#989898;transform:scaleX(0.9133);">Head Scale Strength</div>
<div class="t" style="left:953.00px;top:329.00px;font-size:7.60px;line-height:9.50px;color:#a8a8a8;transform:scaleX(0.8573);">%</div>
<div class="t" style="left:946.60px;top:329.00px;font-size:7.60px;line-height:9.50px;color:#3f86d8;transform:scaleX(0.9446);">0</div>
<div class="t" style="left:823.00px;top:342.66px;font-size:7.60px;line-height:9.50px;color:#f0f0f0;transform:scaleX(0.9458);">Head Tilt Strength</div>
<div class="t" style="left:953.00px;top:342.66px;font-size:7.60px;line-height:9.50px;color:#a8a8a8;transform:scaleX(0.8573);">%</div>
<div class="t" style="left:943.00px;top:342.66px;font-size:7.60px;line-height:9.50px;color:#3f86d8;transform:scaleX(0.8991);">99</div>
<svg style="left:966.8px;top:344.125px;" width="6.4" height="6" viewBox="0 0 6.4 6"><path d="M.5 .3L5.9 5.7M5.9 .3L.5 5.7" stroke="#e0e0e0" stroke-width="1.3" fill="none"/></svg>
<div class="t" style="left:823.00px;top:356.33px;font-size:7.60px;line-height:9.50px;color:#474747;transform:scaleX(0.9342);">Eyebrow Strength</div>
<div class="t" style="left:953.00px;top:356.33px;font-size:7.60px;line-height:9.50px;color:#474747;transform:scaleX(0.8573);">%</div>
<div class="t" style="left:943.00px;top:356.33px;font-size:7.60px;line-height:9.50px;color:#474747;transform:scaleX(0.8991);">75</div>
<div class="t" style="left:823.00px;top:369.99px;font-size:7.60px;line-height:9.50px;color:#cdcdcd;transform:scaleX(0.9379);">Eyelid Strength</div>
<div class="t" style="left:953.00px;top:369.99px;font-size:7.60px;line-height:9.50px;color:#a8a8a8;transform:scaleX(0.8573);">%</div>
<div class="t" style="left:946.60px;top:369.99px;font-size:7.60px;line-height:9.50px;color:#3f86d8;transform:scaleX(0.9446);">0</div>
<div class="t" style="left:823.00px;top:383.66px;font-size:7.60px;line-height:9.50px;color:#cdcdcd;transform:scaleX(0.9630);">Mouth Strength</div>
<div class="t" style="left:953.00px;top:383.66px;font-size:7.60px;line-height:9.50px;color:#a8a8a8;transform:scaleX(0.8573);">%</div>
<div class="t" style="left:946.60px;top:383.66px;font-size:7.60px;line-height:9.50px;color:#3f86d8;transform:scaleX(0.9446);">0</div>
<div class="t" style="left:823.00px;top:397.32px;font-size:7.60px;line-height:9.50px;color:#cdcdcd;transform:scaleX(0.9268);">Parallax Strength</div>
<div class="t" style="left:953.00px;top:397.32px;font-size:7.60px;line-height:9.50px;color:#a8a8a8;transform:scaleX(0.8573);">%</div>
<div class="t" style="left:946.60px;top:397.32px;font-size:7.60px;line-height:9.50px;color:#3f86d8;transform:scaleX(0.9446);">0</div>
<div class="t" style="left:823.00px;top:410.99px;font-size:7.60px;line-height:9.50px;color:#474747;transform:scaleX(0.9313);">Raised Eyebrow Tilt</div>
<div class="t" style="left:953.00px;top:410.99px;font-size:7.60px;line-height:9.50px;color:#474747;transform:scaleX(0.8573);">%</div>
<div class="t" style="left:946.60px;top:410.99px;font-size:7.60px;line-height:9.50px;color:#474747;transform:scaleX(0.9446);">0</div>
<div class="t" style="left:823.00px;top:424.65px;font-size:7.60px;line-height:9.50px;color:#474747;transform:scaleX(0.9503);">Lowered Eyebrow Tilt</div>
<div class="t" style="left:953.00px;top:424.65px;font-size:7.60px;line-height:9.50px;color:#474747;transform:scaleX(0.8573);">%</div>
<div class="t" style="left:943.00px;top:424.65px;font-size:7.60px;line-height:9.50px;color:#474747;transform:scaleX(0.8991);">20</div>
<div class="t" style="left:823.00px;top:438.32px;font-size:7.60px;line-height:9.50px;color:#474747;transform:scaleX(0.9410);">Move Eyebrows Together</div>
<div class="a" style="left:951px;top:437.58px;width:9.4px;height:9.2px;background:#3b3b3b;border-radius:1px"></div>
<svg style="left:952.6px;top:439.38px;" width="6.4" height="5.4" viewBox="0 0 6.4 5.4"><path d="M.6 2.8L2.4 4.6L5.8 .6" fill="none" stroke="#5c5c5c" stroke-width="1.3"/></svg>
<svg style="left:813.3px;top:453.445px;" width="3.2" height="5.2" viewBox="0 0 3.2 5.2"><path d="M.4 .3L2.7 2.6L.4 4.9" fill="none" stroke="#d0d0d0" stroke-width="1.1"/></svg>
<div class="t" style="left:823.00px;top:451.78px;font-size:7.60px;line-height:9.50px;color:#cdcdcd;transform:scaleX(0.9269);">Replacements</div>
<div class="a" style="left:782px;top:470.2px;width:178.5px;height:0.8px;background:#2a2a2a;"></div>
<svg style="left:784.4px;top:478.6px;" width="9.4" height="6" viewBox="0 0 9.4 6"><path d="M0 3Q4.7 -2.6 9.4 3Q4.7 8.6 0 3Z" fill="#dcdcdc"/><circle cx="4.7" cy="3" r="1.9" fill="#232323"/><circle cx="4.7" cy="3" r=".6" fill="#dcdcdc" opacity=".7"/></svg><div class="a" style="left:798.4px;top:478.4px;width:6.4px;height:6.4px;background:#e2434b;border-radius:50%"></div><svg style="left:811px;top:479px;" width="3.2" height="5.2" viewBox="0 0 3.2 5.2"><path d="M.4 .3L2.7 2.6L.4 4.9" fill="none" stroke="#c8c8c8" stroke-width="1.1"/></svg><div class="t" style="left:823.00px;top:476.64px;font-size:7.60px;line-height:9.50px;color:#e4e4e4;transform:scaleX(0.9002);">Dragger</div><svg style="left:954.3px;top:479.5px;" width="6" height="5" viewBox="0 0 6 5"><path d="M0 .5H6M0 2.5H6M0 4.5H6" stroke="#bebebe" stroke-width=".9" fill="none"/></svg>
<div class="a" style="left:782px;top:492.4px;width:178.5px;height:0.8px;background:#2a2a2a;"></div>
<svg style="left:784.4px;top:501.2px;" width="9.4" height="6" viewBox="0 0 9.4 6"><path d="M0 3Q4.7 -2.6 9.4 3Q4.7 8.6 0 3Z" fill="#dcdcdc"/><circle cx="4.7" cy="3" r="1.9" fill="#232323"/><circle cx="4.7" cy="3" r=".6" fill="#dcdcdc" opacity=".7"/></svg><div class="a" style="left:798.4px;top:501px;width:6.4px;height:6.4px;background:#e2434b;border-radius:50%"></div><svg style="left:810.6px;top:502.7px;" width="5.4" height="3.2" viewBox="0 0 5.4 3.2"><path d="M.3 .3L2.7 2.7L5.1 .3" fill="none" stroke="#c8c8c8" stroke-width="1.1"/></svg><div class="t" style="left:823.00px;top:499.24px;font-size:7.60px;line-height:9.50px;color:#e4e4e4;transform:scaleX(0.8693);">Eye Gaze</div><svg style="left:954.3px;top:502.1px;" width="6" height="5" viewBox="0 0 6 5"><path d="M0 .5H6M0 2.5H6M0 4.5H6" stroke="#bebebe" stroke-width=".9" fill="none"/></svg>
<div class="a" style="left:811.8px;top:515.8px;width:6px;height:6px;background:#e2434b;border-radius:50%"></div>
<div class="t" style="left:823.00px;top:514.14px;font-size:7.60px;line-height:9.50px;color:#989898;transform:scaleX(0.9410);">Camera Input</div>
<div class="a" style="left:811.8px;top:528.6px;width:6px;height:6px;border:1px solid #9a9a9a;border-radius:50%"></div>
<div class="t" style="left:823.00px;top:528.34px;font-size:7.60px;line-height:9.50px;color:#989898;transform:scaleX(0.9269);">Mouse &amp; Touch Input</div>
<div class="a" style="left:0px;top:323.2px;width:779.5px;height:208.8px;background:#232323;"></div>
<div class="t" style="left:8.75px;top:329.04px;font-size:7.60px;line-height:9.50px;color:#d6d6d6;transform:scaleX(0.9611);-webkit-text-stroke:.3px currentColor;">Timeline: run-grabrun</div>
<svg style="left:85px;top:330.6px;" width="6" height="5" viewBox="0 0 6 5"><path d="M0 .5H6M0 2.5H6M0 4.5H6" stroke="#cfcfcf" stroke-width=".9" fill="none"/></svg>
<div class="a" style="left:6.2px;top:358px;width:144.6px;height:10.8px;background:#151515;"></div>
<svg style="left:8.4px;top:359.6px;" width="8" height="8" viewBox="0 0 8 8"><circle cx="4.9" cy="3.1" r="2.5" fill="none" stroke="#d8d8d8" stroke-width="1.1"/><path d="M3.1 4.9L.5 7.5" stroke="#d8d8d8" stroke-width="1.3"/></svg>
<svg style="left:163px;top:360.2px;" width="10.2" height="7.6" viewBox="0 0 10.2 7.6"><path d="M2.6 3Q2.6 .2 5.1 .2Q7.6 .2 7.6 3Z" fill="#c0c0c0"/><path d="M0 3.5H10.2" stroke="#c0c0c0" stroke-width="1"/><path d="M1 4.6V7.4M3 4.6V7.4M5.1 3.5V7.4M7.2 4.6V7.4M9.2 4.6V7.4" stroke="#c0c0c0" stroke-width="1.1"/></svg>
<div class="t" style="left:208.00px;top:352.87px;font-size:7.60px;line-height:9.50px;color:#868686;transform:scaleX(0.7451);">frames</div>
<div class="t" style="left:212.80px;top:361.94px;font-size:7.80px;line-height:9.75px;color:#bdbdbd;transform:scaleX(0.7590);">m:ss</div>
<div class="a" style="left:0px;top:373.2px;width:231px;height:1px;background:#1a1a1a;"></div>
<div class="a" style="left:0px;top:383.2px;width:231px;height:0.8px;background:#1d1d1d;"></div>
<div class="a" style="left:232px;top:342px;width:535.6px;height:9px;background:#313131;"></div>
<div class="a" style="left:251.2px;top:342px;width:164px;height:8.9px;background:#727272;"></div>
<div class="a" style="left:251.2px;top:342px;width:1.3px;height:8.9px;background:#989898;"></div>
<div class="a" style="left:414px;top:342px;width:1.2px;height:8.9px;background:#b4b4b4;"></div>
<div class="a" style="left:232px;top:351px;width:535.6px;height:23.4px;background:#2c2c2c;"></div>
<div class="a" style="left:232px;top:351px;width:19.2px;height:23.4px;background:#313131;"></div>
<div class="a" style="left:251.2px;top:351px;width:164px;height:23.4px;background:#3b3b3b;"></div>
<div class="a" style="left:232px;top:374.2px;width:535.6px;height:0.9px;background:#191919;"></div>
<div class="a" style="left:232px;top:375px;width:535.6px;height:9.8px;background:#262626;"></div>
<div class="a" style="left:251.2px;top:375px;width:164px;height:9.8px;background:#3a3a3a;"></div>
<div class="a" style="left:232px;top:384.8px;width:535.6px;height:134.6px;background:#333333;"></div>
<div class="a" style="left:251.2px;top:384.8px;width:164px;height:134.6px;background:#444444;"></div>
<div class="a" style="left:410.2px;top:342.2px;width:5px;height:177.2px;background:linear-gradient(90deg,rgba(255,255,255,0),rgba(255,255,255,.05));"></div>
<div class="a" style="left:232px;top:410.3px;width:535.6px;height:0.9px;background:#272727;"></div>
<div class="a" style="left:251.2px;top:410.3px;width:164px;height:0.9px;background:#343434;"></div>
<div class="a" style="left:232px;top:423.1px;width:535.6px;height:0.9px;background:#272727;"></div>
<div class="a" style="left:251.2px;top:423.1px;width:164px;height:0.9px;background:#343434;"></div>
<div class="a" style="left:232px;top:434.79px;width:535.6px;height:0.9px;background:#272727;"></div>
<div class="a" style="left:251.2px;top:434.79px;width:164px;height:0.9px;background:#343434;"></div>
<div class="a" style="left:232px;top:446.48px;width:535.6px;height:0.9px;background:#272727;"></div>
<div class="a" style="left:251.2px;top:446.48px;width:164px;height:0.9px;background:#343434;"></div>
<div class="a" style="left:232px;top:458.17px;width:535.6px;height:0.9px;background:#272727;"></div>
<div class="a" style="left:251.2px;top:458.17px;width:164px;height:0.9px;background:#343434;"></div>
<div class="a" style="left:232px;top:469.86px;width:535.6px;height:0.9px;background:#272727;"></div>
<div class="a" style="left:251.2px;top:469.86px;width:164px;height:0.9px;background:#343434;"></div>
<div class="a" style="left:232px;top:481.55px;width:535.6px;height:0.9px;background:#272727;"></div>
<div class="a" style="left:251.2px;top:481.55px;width:164px;height:0.9px;background:#343434;"></div>
<div class="a" style="left:232px;top:493.24px;width:535.6px;height:0.9px;background:#272727;"></div>
<div class="a" style="left:251.2px;top:493.24px;width:164px;height:0.9px;background:#343434;"></div>
<div class="a" style="left:232px;top:504.93px;width:535.6px;height:0.9px;background:#272727;"></div>
<div class="a" style="left:251.2px;top:504.93px;width:164px;height:0.9px;background:#343434;"></div>
<div class="a" style="left:232px;top:516.62px;width:535.6px;height:0.9px;background:#272727;"></div>
<div class="a" style="left:251.2px;top:516.62px;width:164px;height:0.9px;background:#343434;"></div>
<div class="t" style="left:234.00px;top:353.00px;font-size:7.40px;line-height:9.25px;color:#8c8c8c;transform:scaleX(0.7758);">0</div>
<div class="t" style="left:280.11px;top:353.00px;font-size:7.40px;line-height:9.25px;color:#8c8c8c;transform:scaleX(0.7777);">250</div>
<div class="t" style="left:326.23px;top:353.00px;font-size:7.40px;line-height:9.25px;color:#8c8c8c;transform:scaleX(0.7777);">500</div>
<div class="t" style="left:372.34px;top:353.00px;font-size:7.40px;line-height:9.25px;color:#8c8c8c;transform:scaleX(0.7777);">750</div>
<div class="t" style="left:418.45px;top:353.00px;font-size:7.40px;line-height:9.25px;color:#8c8c8c;transform:scaleX(0.7780);">1000</div>
<div class="t" style="left:464.56px;top:353.00px;font-size:7.40px;line-height:9.25px;color:#8c8c8c;transform:scaleX(0.7780);">1250</div>
<div class="t" style="left:510.68px;top:353.00px;font-size:7.40px;line-height:9.25px;color:#8c8c8c;transform:scaleX(0.7780);">1500</div>
<div class="t" style="left:556.79px;top:353.00px;font-size:7.40px;line-height:9.25px;color:#8c8c8c;transform:scaleX(0.7780);">1750</div>
<div class="t" style="left:602.90px;top:353.00px;font-size:7.40px;line-height:9.25px;color:#8c8c8c;transform:scaleX(0.7780);">2000</div>
<div class="t" style="left:649.01px;top:353.00px;font-size:7.40px;line-height:9.25px;color:#8c8c8c;transform:scaleX(0.7780);">2250</div>
<div class="t" style="left:695.12px;top:353.00px;font-size:7.40px;line-height:9.25px;color:#8c8c8c;transform:scaleX(0.7780);">2500</div>
<div class="t" style="left:741.24px;top:353.00px;font-size:7.40px;line-height:9.25px;color:#8c8c8c;transform:scaleX(0.7780);">2750</div>
<div class="t" style="left:231.20px;top:362.34px;font-size:7.80px;line-height:9.75px;color:#c2c2c2;transform:scaleX(0.8296);">0:00</div>
<div class="t" style="left:253.07px;top:362.34px;font-size:7.80px;line-height:9.75px;color:#c2c2c2;transform:scaleX(0.8296);">0:05</div>
<div class="t" style="left:280.73px;top:362.34px;font-size:7.80px;line-height:9.75px;color:#c2c2c2;transform:scaleX(0.8296);">0:10</div>
<div class="t" style="left:308.40px;top:362.34px;font-size:7.80px;line-height:9.75px;color:#c2c2c2;transform:scaleX(0.8296);">0:15</div>
<div class="t" style="left:336.07px;top:362.34px;font-size:7.80px;line-height:9.75px;color:#c2c2c2;transform:scaleX(0.8296);">0:20</div>
<div class="t" style="left:363.74px;top:362.34px;font-size:7.80px;line-height:9.75px;color:#c2c2c2;transform:scaleX(0.8296);">0:25</div>
<div class="t" style="left:391.40px;top:362.34px;font-size:7.80px;line-height:9.75px;color:#c2c2c2;transform:scaleX(0.8296);">0:30</div>
<div class="t" style="left:419.07px;top:362.34px;font-size:7.80px;line-height:9.75px;color:#c2c2c2;transform:scaleX(0.8296);">0:35</div>
<div class="t" style="left:446.74px;top:362.34px;font-size:7.80px;line-height:9.75px;color:#c2c2c2;transform:scaleX(0.8296);">0:40</div>
<div class="t" style="left:474.41px;top:362.34px;font-size:7.80px;line-height:9.75px;color:#c2c2c2;transform:scaleX(0.8296);">0:45</div>
<div class="t" style="left:502.07px;top:362.34px;font-size:7.80px;line-height:9.75px;color:#c2c2c2;transform:scaleX(0.8296);">0:50</div>
<div class="t" style="left:529.74px;top:362.34px;font-size:7.80px;line-height:9.75px;color:#c2c2c2;transform:scaleX(0.8296);">0:55</div>
<div class="t" style="left:557.41px;top:362.34px;font-size:7.80px;line-height:9.75px;color:#c2c2c2;transform:scaleX(0.8296);">1:00</div>
<div class="t" style="left:585.08px;top:362.34px;font-size:7.80px;line-height:9.75px;color:#c2c2c2;transform:scaleX(0.8296);">1:05</div>
<div class="t" style="left:612.75px;top:362.34px;font-size:7.80px;line-height:9.75px;color:#c2c2c2;transform:scaleX(0.8296);">1:10</div>
<div class="t" style="left:640.41px;top:362.34px;font-size:7.80px;line-height:9.75px;color:#c2c2c2;transform:scaleX(0.8296);">1:15</div>
<div class="t" style="left:668.08px;top:362.34px;font-size:7.80px;line-height:9.75px;color:#c2c2c2;transform:scaleX(0.8296);">1:20</div>
<div class="t" style="left:695.75px;top:362.34px;font-size:7.80px;line-height:9.75px;color:#c2c2c2;transform:scaleX(0.8296);">1:25</div>
<div class="t" style="left:723.41px;top:362.34px;font-size:7.80px;line-height:9.75px;color:#c2c2c2;transform:scaleX(0.8296);">1:30</div>
<div class="t" style="left:751.08px;top:362.34px;font-size:7.80px;line-height:9.75px;color:#c2c2c2;transform:scaleX(0.8296);">1:35</div>
<svg style="left:0;top:0" width="1000" height="532" viewBox="0 0 1000 532"><path d="M232.40 355.6V359.8" stroke="#5a5a5a" stroke-width=".8"/><path d="M278.51 355.6V359.8" stroke="#5a5a5a" stroke-width=".8"/><path d="M324.62 355.6V359.8" stroke="#5a5a5a" stroke-width=".8"/><path d="M370.74 355.6V359.8" stroke="#5a5a5a" stroke-width=".8"/><path d="M416.85 355.6V359.8" stroke="#5a5a5a" stroke-width=".8"/><path d="M462.96 355.6V359.8" stroke="#5a5a5a" stroke-width=".8"/><path d="M509.07 355.6V359.8" stroke="#5a5a5a" stroke-width=".8"/><path d="M555.19 355.6V359.8" stroke="#5a5a5a" stroke-width=".8"/><path d="M601.30 355.6V359.8" stroke="#5a5a5a" stroke-width=".8"/><path d="M647.41 355.6V359.8" stroke="#5a5a5a" stroke-width=".8"/><path d="M693.52 355.6V359.8" stroke="#5a5a5a" stroke-width=".8"/><path d="M739.64 355.6V359.8" stroke="#5a5a5a" stroke-width=".8"/><path d="M259.97 370.4V373.8" stroke="#8c8c8c" stroke-width=".8"/><path d="M287.63 370.4V373.8" stroke="#8c8c8c" stroke-width=".8"/><path d="M315.30 370.4V373.8" stroke="#8c8c8c" stroke-width=".8"/><path d="M342.97 370.4V373.8" stroke="#8c8c8c" stroke-width=".8"/><path d="M370.64 370.4V373.8" stroke="#8c8c8c" stroke-width=".8"/><path d="M398.31 370.4V373.8" stroke="#8c8c8c" stroke-width=".8"/><path d="M425.97 370.4V373.8" stroke="#8c8c8c" stroke-width=".8"/><path d="M453.64 370.4V373.8" stroke="#8c8c8c" stroke-width=".8"/><path d="M481.31 370.4V373.8" stroke="#8c8c8c" stroke-width=".8"/><path d="M508.98 370.4V373.8" stroke="#8c8c8c" stroke-width=".8"/><path d="M536.64 370.4V373.8" stroke="#8c8c8c" stroke-width=".8"/><path d="M564.31 370.4V373.8" stroke="#8c8c8c" stroke-width=".8"/><path d="M591.98 370.4V373.8" stroke="#8c8c8c" stroke-width=".8"/><path d="M619.64 370.4V373.8" stroke="#8c8c8c" stroke-width=".8"/><path d="M647.31 370.4V373.8" stroke="#8c8c8c" stroke-width=".8"/><path d="M674.98 370.4V373.8" stroke="#8c8c8c" stroke-width=".8"/><path d="M702.65 370.4V373.8" stroke="#8c8c8c" stroke-width=".8"/><path d="M730.31 370.4V373.8" stroke="#8c8c8c" stroke-width=".8"/><path d="M757.98 370.4V373.8" stroke="#8c8c8c" stroke-width=".8"/></svg>
<svg style="left:0;top:0" width="1000" height="532" viewBox="0 0 1000 532"><rect x="251.40" y="384.2" width="90.60" height="26.1" fill="#2a8276"/><path d="M251.40 397.30L251.40 392.67L251.85 392.78L252.30 390.45L252.75 392.15L253.20 390.05L253.65 390.34L254.10 391.17L254.56 389.25L255.01 390.73L255.46 389.03L255.91 390.13L256.36 390.16L256.81 389.04L257.26 387.64L257.71 390.27L258.16 389.92L258.61 388.40L259.06 387.17L259.51 388.46L259.96 389.03L260.41 386.79L260.87 390.13L261.32 387.06L261.77 389.11L262.22 389.63L262.67 389.75L263.12 389.12L263.57 387.37L264.02 389.87L264.47 388.75L264.92 390.13L265.37 393.58L265.82 391.78L266.27 391.85L266.73 391.75L267.18 391.44L267.63 390.94L268.08 395.18L268.53 393.68L268.98 390.58L269.43 390.87L269.88 391.37L270.33 389.44L270.78 389.65L271.23 391.17L271.68 389.79L272.13 389.81L272.59 388.38L273.04 388.79L273.49 390.32L273.94 387.72L274.39 390.87L274.84 389.78L275.29 388.57L275.74 390.87L276.19 389.71L276.64 391.47L277.09 389.44L277.54 390.17L277.99 393.44L278.44 394.71L278.90 396.03L279.35 391.70L279.80 390.00L280.25 389.30L280.70 389.46L281.15 387.81L281.60 387.18L282.05 388.67L282.50 387.73L282.95 389.74L283.40 387.19L283.85 387.25L284.30 385.88L284.76 386.47L285.21 388.45L285.66 388.14L286.11 387.20L286.56 389.72L287.01 388.27L287.46 389.53L287.91 390.17L288.36 394.70L288.81 391.18L289.26 390.45L289.71 390.00L290.16 389.54L290.61 387.80L291.07 390.71L291.52 389.32L291.97 388.89L292.42 387.59L292.87 387.75L293.32 387.65L293.77 392.33L294.22 391.57L294.67 389.42L295.12 387.44L295.57 387.26L296.02 390.46L296.47 392.60L296.93 392.59L297.38 390.75L297.83 389.96L298.28 389.80L298.73 391.22L299.18 392.36L299.63 390.99L300.08 391.28L300.53 390.62L300.98 389.20L301.43 390.13L301.88 390.68L302.33 390.17L302.79 389.78L303.24 391.88L303.69 388.56L304.14 388.80L304.59 388.25L305.04 388.36L305.49 389.71L305.94 389.57L306.39 390.59L306.84 388.60L307.29 390.71L307.74 390.72L308.19 390.26L308.64 390.50L309.10 389.91L309.55 391.03L310.00 391.27L310.45 390.73L310.90 390.90L311.35 389.89L311.80 391.10L312.25 388.16L312.70 390.01L313.15 393.63L313.60 395.26L314.05 395.16L314.50 393.14L314.96 391.50L315.41 387.20L315.86 386.02L316.31 387.76L316.76 387.65L317.21 389.14L317.66 389.16L318.11 388.40L318.56 388.85L319.01 386.97L319.46 389.65L319.91 390.39L320.36 387.19L320.81 388.96L321.27 390.54L321.72 389.23L322.17 391.25L322.62 389.47L323.07 387.97L323.52 389.95L323.97 391.90L324.42 391.15L324.87 389.96L325.32 390.59L325.77 388.30L326.22 389.14L326.67 388.21L327.13 389.88L327.58 390.33L328.03 388.25L328.48 387.73L328.93 388.38L329.38 388.73L329.83 388.87L330.28 389.37L330.73 391.57L331.18 391.31L331.63 393.85L332.08 396.03L332.53 396.03L332.99 396.03L333.44 393.78L333.89 390.53L334.34 388.91L334.79 390.52L335.24 389.64L335.69 392.46L336.14 388.68L336.59 389.87L337.04 390.18L337.49 389.97L337.94 389.93L338.39 389.80L338.84 388.19L339.30 387.15L339.75 387.38L340.20 388.75L340.65 388.18L341.10 387.72L341.55 390.43L342.00 388.38L342.00 397.30Z" fill="#b8d9d4"/><path d="M251.40 410.30L251.40 404.05L251.85 403.99L252.30 403.65L252.75 404.18L253.20 404.84L253.65 402.45L254.10 403.72L254.56 401.89L255.01 401.08L255.46 402.81L255.91 402.57L256.36 400.82L256.81 401.67L257.26 403.63L257.71 403.81L258.16 403.74L258.61 401.16L259.06 401.45L259.51 403.61L259.96 401.22L260.41 400.61L260.87 401.62L261.32 402.59L261.77 401.87L262.22 403.28L262.67 403.70L263.12 400.52L263.57 401.71L264.02 402.28L264.47 401.23L264.92 404.39L265.37 405.18L265.82 404.27L266.27 404.78L266.73 404.53L267.18 404.61L267.63 405.93L268.08 407.81L268.53 407.15L268.98 404.67L269.43 405.47L269.88 402.76L270.33 404.55L270.78 404.07L271.23 403.50L271.68 402.26L272.13 403.75L272.59 401.93L273.04 403.23L273.49 403.05L273.94 403.02L274.39 404.71L274.84 403.30L275.29 404.21L275.74 404.88L276.19 402.25L276.64 404.48L277.09 403.72L277.54 403.87L277.99 406.80L278.44 409.13L278.90 408.43L279.35 405.61L279.80 402.93L280.25 404.53L280.70 402.72L281.15 403.56L281.60 403.24L282.05 401.34L282.50 402.02L282.95 401.63L283.40 400.79L283.85 400.14L284.30 401.65L284.76 401.03L285.21 401.40L285.66 401.43L286.11 400.91L286.56 401.86L287.01 401.73L287.46 402.09L287.91 400.93L288.36 405.74L288.81 404.30L289.26 401.23L289.71 403.54L290.16 402.58L290.61 401.31L291.07 401.65L291.52 404.00L291.97 404.00L292.42 402.85L292.87 404.04L293.32 403.53L293.77 406.42L294.22 404.16L294.67 401.60L295.12 401.17L295.57 403.77L296.02 402.08L296.47 404.32L296.93 406.26L297.38 402.06L297.83 401.90L298.28 404.65L298.73 402.36L299.18 404.41L299.63 404.25L300.08 402.65L300.53 403.24L300.98 405.53L301.43 404.57L301.88 404.20L302.33 404.68L302.79 405.01L303.24 404.41L303.69 402.85L304.14 405.05L304.59 403.05L305.04 403.28L305.49 404.57L305.94 403.41L306.39 402.35L306.84 402.70L307.29 404.22L307.74 401.13L308.19 401.85L308.64 401.29L309.10 404.29L309.55 403.81L310.00 404.61L310.45 402.12L310.90 403.83L311.35 404.27L311.80 403.24L312.25 401.76L312.70 402.89L313.15 406.55L313.60 408.77L314.05 406.39L314.50 405.76L314.96 402.99L315.41 403.57L315.86 403.08L316.31 400.76L316.76 401.61L317.21 402.83L317.66 399.96L318.11 401.11L318.56 400.70L319.01 403.31L319.46 400.89L319.91 403.78L320.36 401.29L320.81 402.87L321.27 403.42L321.72 402.84L322.17 401.67L322.62 403.97L323.07 404.59L323.52 404.67L323.97 406.88L324.42 405.15L324.87 404.23L325.32 404.52L325.77 403.94L326.22 403.53L326.67 403.54L327.13 402.01L327.58 403.65L328.03 403.02L328.48 404.23L328.93 403.79L329.38 405.07L329.83 404.46L330.28 405.45L330.73 403.31L331.18 404.67L331.63 407.69L332.08 409.13L332.53 408.71L332.99 409.13L333.44 405.15L333.89 404.95L334.34 404.14L334.79 402.74L335.24 405.09L335.69 407.47L336.14 403.27L336.59 401.36L337.04 403.33L337.49 401.49L337.94 401.78L338.39 401.92L338.84 402.65L339.30 402.82L339.75 403.83L340.20 403.61L340.65 403.88L341.10 401.67L341.55 403.39L342.00 403.77L342.00 410.30Z" fill="#b8d9d4"/><path d="M251.40 398H342.00" stroke="#2a8276" stroke-width="1.5"/></svg>
<div class="a" style="left:232px;top:410.2px;width:183.2px;height:8.5px;background:#56b6ec;border-top:.8px solid #3a86ba"></div>
<div class="a" style="left:232px;top:418.6px;width:183.2px;height:4.2px;background:#afdef7;"></div>
<div class="a" style="left:232px;top:423.8px;width:115px;height:10.9px;background:#6bb8a7;"></div><div class="a" style="left:232px;top:423.8px;width:4.6px;height:7px;background:linear-gradient(150deg,rgba(255,255,255,.6),rgba(255,255,255,.2) 45%,rgba(255,255,255,0) 80%);"></div><div class="a" style="left:342.4px;top:423.8px;width:4.6px;height:7px;background:linear-gradient(210deg,rgba(255,255,255,.6),rgba(255,255,255,.2) 45%,rgba(255,255,255,0) 80%);"></div>
<div class="a" style="left:243.2px;top:435.5px;width:172px;height:10.9px;background:#8cbc9a;"></div><div class="a" style="left:243.2px;top:435.5px;width:4.6px;height:7px;background:linear-gradient(150deg,rgba(255,255,255,.6),rgba(255,255,255,.2) 45%,rgba(255,255,255,0) 80%);"></div><div class="a" style="left:410.6px;top:435.5px;width:4.6px;height:7px;background:linear-gradient(210deg,rgba(255,255,255,.6),rgba(255,255,255,.2) 45%,rgba(255,255,255,0) 80%);"></div>
<div class="a" style="left:232px;top:447.2px;width:10.8px;height:10.9px;background:#7dbfa6;"></div><div class="a" style="left:232px;top:447.2px;width:4.6px;height:7px;background:linear-gradient(150deg,rgba(255,255,255,.6),rgba(255,255,255,.2) 45%,rgba(255,255,255,0) 80%);"></div>
<div class="a" style="left:243.5px;top:447.2px;width:103.5px;height:10.9px;background:#5a5a5a;"></div><div class="a" style="left:342.4px;top:447.2px;width:4.6px;height:7px;background:linear-gradient(210deg,rgba(255,255,255,.6),rgba(255,255,255,.2) 45%,rgba(255,255,255,0) 80%);"></div>
<div class="a" style="left:243.2px;top:458.9px;width:172px;height:10.9px;background:#9995bd;"></div><div class="a" style="left:243.2px;top:458.9px;width:4.6px;height:7px;background:linear-gradient(150deg,rgba(255,255,255,.6),rgba(255,255,255,.2) 45%,rgba(255,255,255,0) 80%);"></div><div class="a" style="left:410.6px;top:458.9px;width:4.6px;height:7px;background:linear-gradient(210deg,rgba(255,255,255,.6),rgba(255,255,255,.2) 45%,rgba(255,255,255,0) 80%);"></div>
<div class="a" style="left:232px;top:470.6px;width:10.8px;height:10.9px;background:#a09bc6;"></div><div class="a" style="left:232px;top:470.6px;width:4.6px;height:7px;background:linear-gradient(150deg,rgba(255,255,255,.6),rgba(255,255,255,.2) 45%,rgba(255,255,255,0) 80%);"></div>
<div class="a" style="left:243.5px;top:470.6px;width:103.5px;height:10.9px;background:#5a5a5a;"></div><div class="a" style="left:342.4px;top:470.6px;width:4.6px;height:7px;background:linear-gradient(210deg,rgba(255,255,255,.6),rgba(255,255,255,.2) 45%,rgba(255,255,255,0) 80%);"></div>
<div class="a" style="left:251.2px;top:482.3px;width:90.8px;height:10.9px;background:#a8c18f;"></div>
<div class="a" style="left:251.2px;top:494px;width:90.8px;height:10.9px;background:repeating-linear-gradient(135deg,#a8c18f 0,#a8c18f 1.1px,#3e6c38 1.1px,#3e6c38 2.3px);"></div>
<div class="a" style="left:243.2px;top:505.7px;width:172px;height:10.9px;background:#8cbc9a;"></div>
<div class="a" style="left:232px;top:517.5px;width:10.8px;height:2px;background:#8fb8a6;"></div>
<div class="a" style="left:243.5px;top:517.5px;width:103.5px;height:2px;background:#5a5a5a;"></div>
<div class="a" style="left:230.6px;top:342.2px;width:1.4px;height:177.2px;background:#181818;"></div>
<svg style="left:230.9px;top:363.6px;" width="5.2" height="10" viewBox="0 0 5.2 10"><path d="M.4 0H4.8V6.6L2.6 9.8L.4 6.6Z" fill="#3c8be2"/></svg>
<div class="a" style="left:232px;top:373px;width:1px;height:146.4px;background:#3272bd;"></div>
<div class="a" style="left:768px;top:384.8px;width:10px;height:134.6px;background:#2a2a2a;"></div>
<div class="a" style="left:768.4px;top:385.4px;width:9.2px;height:124.4px;background:#3c3c3c;border-radius:4px"></div>
<div class="a" style="left:0px;top:519.4px;width:231px;height:12.6px;background:#2a2a2a;"></div>
<div class="a" style="left:231px;top:519.4px;width:548.5px;height:12.6px;background:#1e1e1e;"></div>
<div class="a" style="left:635px;top:519.4px;width:144.5px;height:12.6px;background:#222222;"></div>
<div class="a" style="left:232.5px;top:520.8px;width:168px;height:10.2px;background:#383838;border-radius:5px"></div>
<svg style="left:639.4px;top:521.4px;" width="8" height="8" viewBox="0 0 8 8"><path d="M4.6 0H8V3.4Z M3.4 8H0V4.6Z" fill="#c4c4c4"/><path d="M7 1L4.8 3.2M1 7L3.2 4.8" stroke="#c4c4c4" stroke-width="1.2"/></svg>
<svg style="left:656px;top:524px;" width="6" height="3.4" viewBox="0 0 6 3.4"><path d="M0 3.4L2.2 .6L3.4 1.8L4.2 1L6 3.4Z" fill="#c4c4c4"/></svg>
<div class="a" style="left:672.4px;top:525.6px;width:72.6px;height:0.9px;background:#4e4e4e;"></div>
<div class="a" style="left:693.9px;top:522.6px;width:6.8px;height:6.8px;border:1.2px solid #c8c8c8;border-radius:50%;background:#222"></div>
<svg style="left:752.6px;top:523.4px;" width="10.6" height="4.4" viewBox="0 0 10.6 4.4"><path d="M0 4.4L3.6 .4L5.4 2.4L7 .8L10.6 4.4Z" fill="#c4c4c4"/></svg>
<div class="a" style="left:0px;top:384px;width:1px;height:135.4px;background:#16161e;"></div>
<div class="a" style="left:1px;top:384px;width:2.6px;height:74.4px;background:#2b8c7d;"></div>
<svg style="left:6.9px;top:386.1px;" width="9.6" height="9.6" viewBox="0 0 9.6 9.6"><path d="M0 3H2.2L5.4 .2V9.4L2.2 6.6H0Z" fill="#d4d4d4"/><path d="M6.4 2.2Q9.2 2.4 9.2 4.8Q9.2 7.2 6.4 7.4" fill="none" stroke="#d4d4d4" stroke-width="1.3"/></svg>
<svg style="left:45.8px;top:387.8px;" width="9" height="6.6" viewBox="0 0 9 6.6"><path d="M0 3.3H9" stroke="#8a8a8a" stroke-width=".7"/><path d="M2.2 .8V5.8M4.5 0V6.6M6.8 .8V5.8" stroke="#e0e0e0" stroke-width="1.3"/></svg>
<div class="t" style="left:61.00px;top:386.54px;font-size:7.60px;line-height:9.50px;color:#d2d2d2;transform:scaleX(0.9370);">vocals.mp3</div>
<svg style="left:217.4px;top:386.8px;" width="8.8" height="6.8" viewBox="0 0 8.8 6.8"><path d="M1.9 3Q1.9 .2 4.4 .2Q6.9 .2 6.9 3Z" fill="#cecece"/><path d="M0 3.5H8.8M1.2 6.2H7.6" stroke="#cecece" stroke-width="1"/><path d="M4.4 3.5V6.2" stroke="#cecece" stroke-width="1.4"/></svg>
<div class="t" style="left:111.75px;top:397.84px;font-size:7.60px;line-height:9.50px;color:#d2d2d2;transform:scaleX(0.9667);">Volume</div>
<div class="t" style="left:198.80px;top:397.84px;font-size:7.60px;line-height:9.50px;color:#3f86d8;transform:scaleX(0.8502);">0</div>
<div class="t" style="left:204.60px;top:397.84px;font-size:7.60px;line-height:9.50px;color:#7a7a7a;transform:scaleX(0.8605);">dB</div>
<div class="a" style="left:3.8px;top:410.5px;width:226.8px;height:12.4px;background:#474747;"></div>
<svg style="left:5.8px;top:413.7px;" width="9.4" height="6" viewBox="0 0 9.4 6"><path d="M0 3Q4.7 -2.6 9.4 3Q4.7 8.6 0 3Z" fill="#e0e0e0"/><circle cx="4.7" cy="3" r="1.9" fill="#474747"/><circle cx="4.7" cy="3" r=".6" fill="#e0e0e0" opacity=".7"/></svg>
<div class="a" style="left:21.2px;top:413.3px;width:6.8px;height:6.8px;background:#e2434b;border-radius:50%"></div>
<svg style="left:34px;top:415.4px;" width="5.4" height="3.2" viewBox="0 0 5.4 3.2"><path d="M.3 .3L2.7 2.7L5.1 .3" fill="none" stroke="#c8c8c8" stroke-width="1.1"/></svg>
<svg style="left:47.6px;top:412.8px;" width="5" height="8" viewBox="0 0 5 8"><circle cx="2.5" cy="1.4" r="1.3" fill="#dcdcdc"/><path d="M2.5 2.2L4.6 6.3H.4Z" fill="#dcdcdc"/><rect x="0" y="6.6" width="5" height="1.3" fill="#dcdcdc"/></svg>
<div class="t" style="left:61.00px;top:412.74px;font-size:7.60px;line-height:9.50px;color:#e4e4e4;transform:scaleX(0.9356);">Noodles 2</div>
<svg style="left:217.4px;top:412.9px;" width="8.8" height="6.8" viewBox="0 0 8.8 6.8"><path d="M1.9 3Q1.9 .2 4.4 .2Q6.9 .2 6.9 3Z" fill="#cecece"/><path d="M0 3.5H8.8M1.2 6.2H7.6" stroke="#cecece" stroke-width="1"/><path d="M4.4 3.5V6.2" stroke="#cecece" stroke-width="1.4"/></svg>
<div class="a" style="left:1px;top:458.4px;width:2.6px;height:23.6px;background:#5c5488;"></div>
<div class="a" style="left:1px;top:482px;width:2.6px;height:23.4px;background:#708e50;"></div>
<div class="a" style="left:1px;top:505.4px;width:2.6px;height:14px;background:#428c62;"></div>
<svg style="left:5.8px;top:426.1px;" width="9.4" height="6" viewBox="0 0 9.4 6"><path d="M0 3Q4.7 -2.6 9.4 3Q4.7 8.6 0 3Z" fill="#dcdcdc"/><circle cx="4.7" cy="3" r="1.9" fill="#232323"/><circle cx="4.7" cy="3" r=".6" fill="#dcdcdc" opacity=".7"/></svg>
<div class="t" style="left:73.80px;top:424.74px;font-size:7.60px;line-height:9.50px;color:#d2d2d2;transform:scaleX(0.9112);">Dragger</div>
<div class="t" style="left:111.75px;top:424.74px;font-size:7.60px;line-height:9.50px;color:#d2d2d2;transform:scaleX(0.9402);">Handle (Draggable, Left Wrist)</div>
<svg style="left:217.4px;top:425.6px;" width="8.8" height="6.8" viewBox="0 0 8.8 6.8"><path d="M1.9 3Q1.9 .2 4.4 .2Q6.9 .2 6.9 3Z" fill="#cecece"/><path d="M0 3.5H8.8M1.2 6.2H7.6" stroke="#cecece" stroke-width="1"/><path d="M4.4 3.5V6.2" stroke="#cecece" stroke-width="1.4"/></svg>
<svg style="left:102.4px;top:439.84px;" width="5.4" height="3.2" viewBox="0 0 5.4 3.2"><path d="M.3 .3L2.7 2.7L5.1 .3" fill="none" stroke="#c8c8c8" stroke-width="1.1"/></svg>
<div class="t" style="left:111.75px;top:436.48px;font-size:7.60px;line-height:9.50px;color:#d2d2d2;transform:scaleX(0.9378);">Handle (Draggable, Right Wrist)</div>
<svg style="left:217.4px;top:437.34px;" width="8.8" height="6.8" viewBox="0 0 8.8 6.8"><path d="M1.9 3Q1.9 .2 4.4 .2Q6.9 .2 6.9 3Z" fill="#cecece"/><path d="M0 3.5H8.8M1.2 6.2H7.6" stroke="#cecece" stroke-width="1"/><path d="M4.4 3.5V6.2" stroke="#cecece" stroke-width="1.4"/></svg>
<svg style="left:5.8px;top:461.32px;" width="9.4" height="6" viewBox="0 0 9.4 6"><path d="M0 3Q4.7 -2.6 9.4 3Q4.7 8.6 0 3Z" fill="#dcdcdc"/><circle cx="4.7" cy="3" r="1.9" fill="#232323"/><circle cx="4.7" cy="3" r=".6" fill="#dcdcdc" opacity=".7"/></svg>
<div class="t" style="left:69.50px;top:459.96px;font-size:7.60px;line-height:9.50px;color:#d2d2d2;transform:scaleX(0.8783);">Eye Gaze</div>
<svg style="left:102.4px;top:463.32px;" width="5.4" height="3.2" viewBox="0 0 5.4 3.2"><path d="M.3 .3L2.7 2.7L5.1 .3" fill="none" stroke="#c8c8c8" stroke-width="1.1"/></svg>
<div class="t" style="left:111.75px;top:459.96px;font-size:7.60px;line-height:9.50px;color:#d2d2d2;transform:scaleX(0.9609);">Keyboard Input</div>
<svg style="left:217.4px;top:460.82px;" width="8.8" height="6.8" viewBox="0 0 8.8 6.8"><path d="M1.9 3Q1.9 .2 4.4 .2Q6.9 .2 6.9 3Z" fill="#cecece"/><path d="M0 3.5H8.8M1.2 6.2H7.6" stroke="#cecece" stroke-width="1"/><path d="M4.4 3.5V6.2" stroke="#cecece" stroke-width="1.4"/></svg>
<svg style="left:5.8px;top:484.8px;" width="9.4" height="6" viewBox="0 0 9.4 6"><path d="M0 3Q4.7 -2.6 9.4 3Q4.7 8.6 0 3Z" fill="#dcdcdc"/><circle cx="4.7" cy="3" r="1.9" fill="#232323"/><circle cx="4.7" cy="3" r=".6" fill="#dcdcdc" opacity=".7"/></svg>
<div class="t" style="left:72.50px;top:483.44px;font-size:7.60px;line-height:9.50px;color:#d2d2d2;transform:scaleX(0.9025);">Lip Sync</div>
<div class="t" style="left:111.75px;top:483.44px;font-size:7.60px;line-height:9.50px;color:#d2d2d2;transform:scaleX(0.9760);">Audio Input</div>
<svg style="left:217.4px;top:484.3px;" width="8.8" height="6.8" viewBox="0 0 8.8 6.8"><path d="M1.9 3Q1.9 .2 4.4 .2Q6.9 .2 6.9 3Z" fill="#cecece"/><path d="M0 3.5H8.8M1.2 6.2H7.6" stroke="#cecece" stroke-width="1"/><path d="M4.4 3.5V6.2" stroke="#cecece" stroke-width="1.4"/></svg>
<div class="t" style="left:111.75px;top:495.18px;font-size:7.60px;line-height:9.50px;color:#a6a6a6;transform:scaleX(0.9074);">Visemes</div>
<svg style="left:5.8px;top:508.28px;" width="9.4" height="6" viewBox="0 0 9.4 6"><path d="M0 3Q4.7 -2.6 9.4 3Q4.7 8.6 0 3Z" fill="#dcdcdc"/><circle cx="4.7" cy="3" r="1.9" fill="#232323"/><circle cx="4.7" cy="3" r=".6" fill="#dcdcdc" opacity=".7"/></svg>
<div class="t" style="left:23.80px;top:506.92px;font-size:7.60px;line-height:9.50px;color:#d2d2d2;transform:scaleX(0.9691);">Walk [Puppet] [Puppet]</div>
<svg style="left:102.4px;top:510.28px;" width="5.4" height="3.2" viewBox="0 0 5.4 3.2"><path d="M.3 .3L2.7 2.7L5.1 .3" fill="none" stroke="#c8c8c8" stroke-width="1.1"/></svg>
<div class="t" style="left:111.75px;top:506.92px;font-size:7.60px;line-height:9.50px;color:#d2d2d2;transform:scaleX(0.9609);">Keyboard Input</div>
<svg style="left:217.4px;top:507.78px;" width="8.8" height="6.8" viewBox="0 0 8.8 6.8"><path d="M1.9 3Q1.9 .2 4.4 .2Q6.9 .2 6.9 3Z" fill="#cecece"/><path d="M0 3.5H8.8M1.2 6.2H7.6" stroke="#cecece" stroke-width="1"/><path d="M4.4 3.5V6.2" stroke="#cecece" stroke-width="1.4"/></svg>
</div></body></html>
